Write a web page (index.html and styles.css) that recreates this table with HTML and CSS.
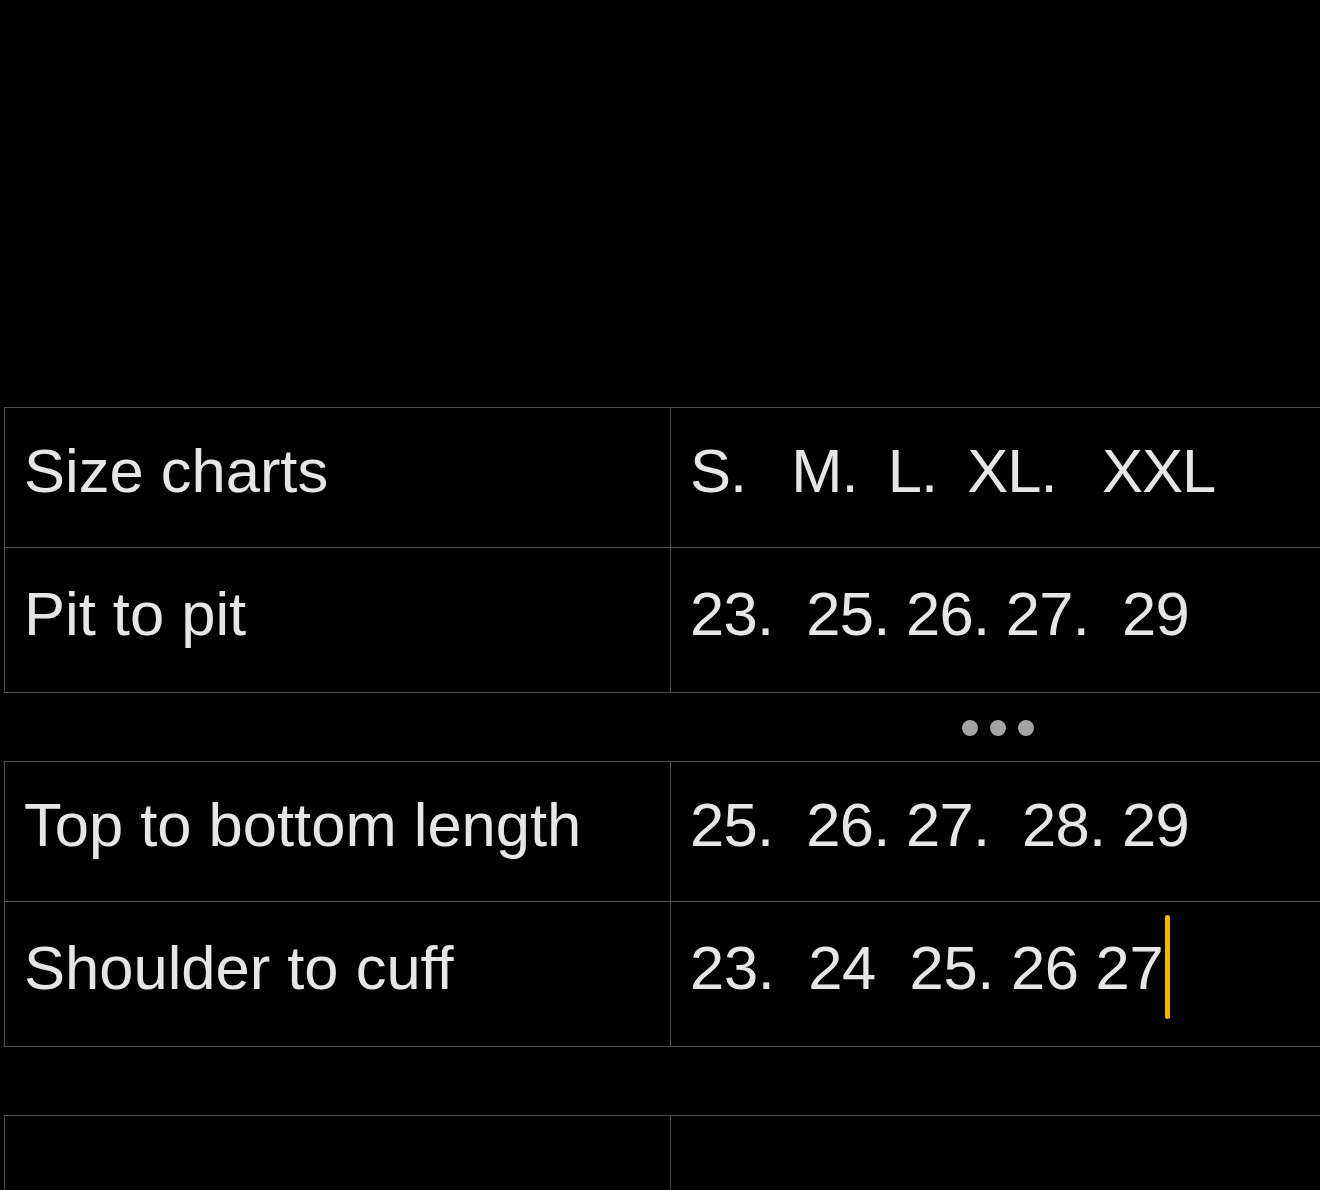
FILE: index.html
```html
<!DOCTYPE html>
<html>
<head>
<meta charset="utf-8">
<link rel="stylesheet" href="styles.css">
</head>
<body>
<main class="page">
  <table class="chart">
    <tr class="row-a"><td class="label">Size charts</td><td class="vals head">S.   M.  L.  XL.   XXL</td></tr>
    <tr class="row-b"><td class="label">Pit to pit</td><td class="vals">23.  25. 26. 27.  29</td></tr>
  </table>
  <div class="more">
    <div class="spacer"></div>
    <div class="dots"><span class="dot"></span><span class="dot"></span><span class="dot"></span></div>
  </div>
  <table class="chart">
    <tr class="row-a"><td class="label">Top to bottom length</td><td class="vals">25.  26. 27.  28. 29</td></tr>
    <tr class="row-b"><td class="label">Shoulder to cuff</td><td class="vals editing">23.  24  25. 26 27<span class="caret"></span></td></tr>
  </table>
  <table class="chart chart-next">
    <tr class="row-a"><td class="label"></td><td class="vals"></td></tr>
  </table>
</main>
</body>
</html>
```

FILE: styles.css
```css
html, body {
  margin: 0;
  padding: 0;
  background: #000;
  overflow: hidden;
  height: 1190px;
}

.page {
  padding-top: 407px;
  padding-left: 4px;
  width: 1340px;
  font-family: "Liberation Sans", Arial, sans-serif;
  color: #e6e6e6;
}

.chart {
  border-collapse: collapse;
  table-layout: fixed;
  width: 1322px;
}

.chart td {
  border: 1px solid #4f4f4f;
  padding: 0 0 14px 19px;
  font-size: 61.5px;
  vertical-align: middle;
  white-space: pre;
  overflow: visible;
}

.chart td.label {
  width: 646px;
}

.chart td.vals {
  letter-spacing: -0.7px;
}

.chart td.head {
  letter-spacing: -1px;
  word-spacing: -1px;
}

.chart td.editing {
  letter-spacing: -0.3px;
}

.row-a { height: 140px; }
.row-b { height: 145px; }

.more {
  display: flex;
  width: 1322px;
  height: 68px;
}

.spacer {
  width: 666px;
}

.dots {
  flex: 1;
  display: flex;
  justify-content: center;
  align-items: center;
  gap: 12px;
  padding-top: 2px;
}

.dot {
  width: 16px;
  height: 16px;
  border-radius: 50%;
  background: #a3a3a6;
}

.chart-next {
  margin-top: 68px;
}

.caret {
  display: inline-block;
  width: 5px;
  height: 104px;
  margin: -44px 0 -30px 2px;
  border-radius: 3px;
  background: #f2b705;
  vertical-align: baseline;
}
```
